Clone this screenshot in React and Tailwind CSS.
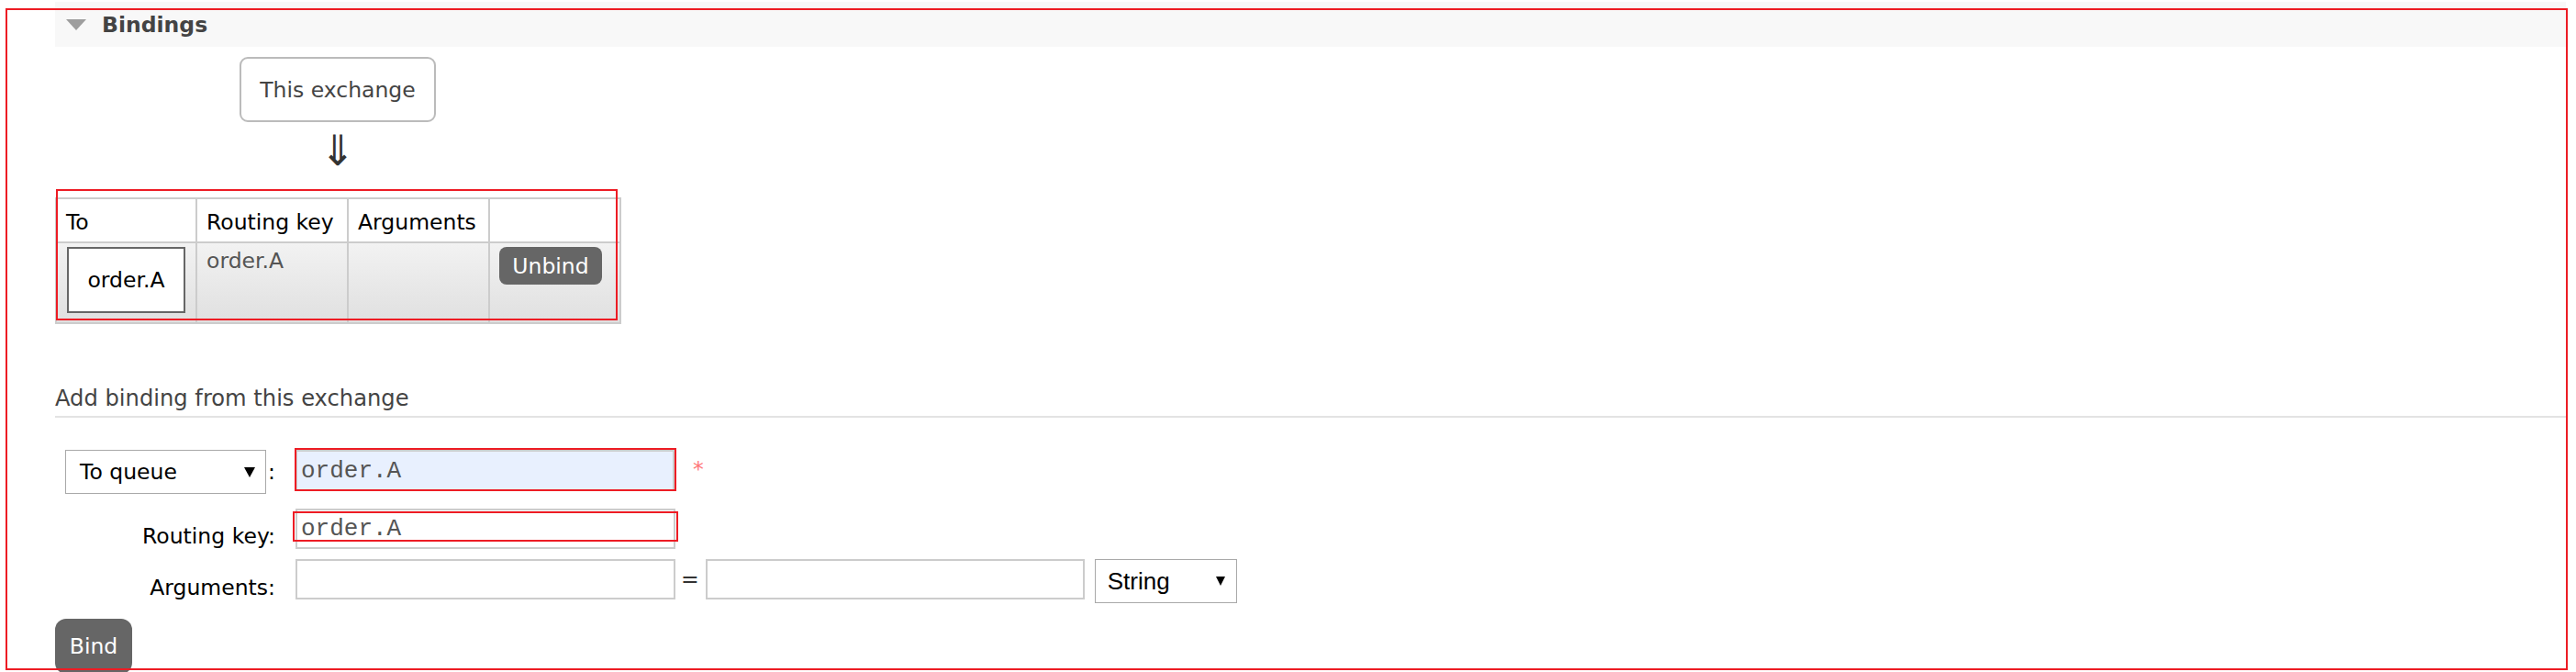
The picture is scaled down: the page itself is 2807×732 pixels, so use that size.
export default function App() {
  const Tri = ({ w, h, color }) => (
    <svg width={w} height={h} viewBox={`0 0 ${w} ${h}`} className="block shrink-0">
      <polygon points={`0,0 ${w},0 ${w / 2},${h}`} fill={color} />
    </svg>
  );

  return (
    <div className="relative w-[2807px] h-[732px] overflow-hidden bg-white font-['DejaVu_Sans',sans-serif] text-[23.5px] leading-[normal]">
      <div className="pt-[2px] pl-[60px] pr-[11px]">
        {/* Section header */}
        <div className="h-[49px] bg-[#f8f8f8] flex items-center">
          <div className="ml-[12px]">
            <Tri w={22} h={12} color="#9e9e9e" />
          </div>
          <span className="ml-[17px] font-bold text-[#444]">Bindings</span>
        </div>

        {/* This exchange node */}
        <div className="ml-[201px] mt-[11px] w-[214px] h-[71px] border-2 border-[#bbb] rounded-[9px] flex items-center justify-center text-[#444]">
          This exchange
        </div>
        <div className="ml-[201px] w-[214px] h-[82px] flex justify-center overflow-hidden">
          <span className="text-[46px] leading-none pt-[8px] text-[#333]">⇓</span>
        </div>

        {/* Bindings table */}
        <div className="w-[617px] bg-[#ccc] p-[2px] grid grid-cols-[151px_163px_152px_141px] grid-rows-[46px_86px] gap-[2px] text-black">
          <div className="bg-white pl-[10px] pt-[11px]">To</div>
          <div className="bg-white pl-[10px] pt-[11px]">Routing key</div>
          <div className="bg-white pl-[10px] pt-[11px]">Arguments</div>
          <div className="bg-white"></div>
          <div className="bg-gradient-to-b from-[#f2f2f2] to-[#e0e0e0] pl-[11px] pt-[4px]">
            <div className="w-[129px] h-[72px] bg-white border-2 border-[#666] flex items-center justify-center">
              order.A
            </div>
          </div>
          <div className="bg-gradient-to-b from-[#f2f2f2] to-[#e0e0e0] pl-[10px] pt-[5px] text-[#555]">order.A</div>
          <div className="bg-gradient-to-b from-[#f2f2f2] to-[#e0e0e0]"></div>
          <div className="bg-gradient-to-b from-[#f2f2f2] to-[#e0e0e0] pl-[10px] pt-[4px]">
            <div className="w-[112px] h-[41px] rounded-[8px] bg-[#666] text-white flex items-center justify-center">
              Unbind
            </div>
          </div>
        </div>

        {/* Add binding heading */}
        <div className="mt-[67px] pb-[5px] border-b-2 border-[#e3e3e3] text-[#444] text-[24.2px]">
          Add binding from this exchange
        </div>

        {/* Row 1 */}
        <div className="mt-[35px] flex items-start h-[48px] text-black">
          <div className="w-[262px] h-[48px] flex items-center justify-end pr-[22px] gap-[2px]">
            <div className="w-[219px] h-[48px] border border-[#a9a9a9] bg-white flex items-center justify-between pl-[15px] pr-[11px]">
              <span>To queue</span>
              <Tri w={12} h={11} color="#000" />
            </div>
            <span>:</span>
          </div>
          <div className="w-[413px] h-[45px] border-2 border-[#ccc] bg-[#e8f0fe] flex items-center pl-[4px] font-['Liberation_Mono',monospace] text-[26px] text-[#555]">
            order.A
          </div>
          <span className="ml-[20px] mt-[7px] text-[#f77]">*</span>
        </div>

        {/* Row 2 */}
        <div className="mt-[16px] flex items-start h-[44px] text-black">
          <div className="w-[262px] text-right pr-[22px] pt-[16px]">Routing key:</div>
          <div className="w-[414px] h-[44px] border-2 border-[#ccc] bg-white flex items-center pl-[4px] font-['Liberation_Mono',monospace] text-[26px] text-[#555]">
            order.A
          </div>
        </div>

        {/* Row 3 */}
        <div className="mt-[11px] flex items-start h-[48px] text-black">
          <div className="w-[262px] text-right pr-[22px] pt-[17px]">Arguments:</div>
          <div className="w-[414px] h-[44px] border-2 border-[#ccc] bg-white"></div>
          <div className="h-[44px] flex items-center ml-[6px] mr-[7px] text-[#333]">=</div>
          <div className="w-[413px] h-[44px] border-2 border-[#ccc] bg-white"></div>
          <div className="ml-[11px] w-[155px] h-[48px] border border-[#a9a9a9] bg-white flex items-center justify-between pl-[13px] pr-[12px] font-['Liberation_Sans',Arial,sans-serif] text-[26px]">
            <span>String</span>
            <Tri w={10} h={10} color="#000" />
          </div>
        </div>

        {/* Bind button */}
        <div className="mt-[17px] w-[84px] h-[60px] rounded-[12px] bg-[#666] text-white flex items-center justify-center">
          Bind
        </div>
      </div>

      {/* Red annotation overlays */}
      <div className="absolute left-[6px] top-[9px] w-[2792px] h-[721px] border-2 border-[#ed1c24] pointer-events-none"></div>
      <div className="absolute left-[61px] top-[206px] w-[612px] h-[143px] border-2 border-[#ed1c24] pointer-events-none"></div>
      <div className="absolute left-[321px] top-[488px] w-[416px] h-[47px] border-2 border-[#ed1c24] pointer-events-none"></div>
      <div className="absolute left-[319px] top-[557px] w-[420px] h-[33px] border-2 border-[#ed1c24] pointer-events-none"></div>
    </div>
  );
}
